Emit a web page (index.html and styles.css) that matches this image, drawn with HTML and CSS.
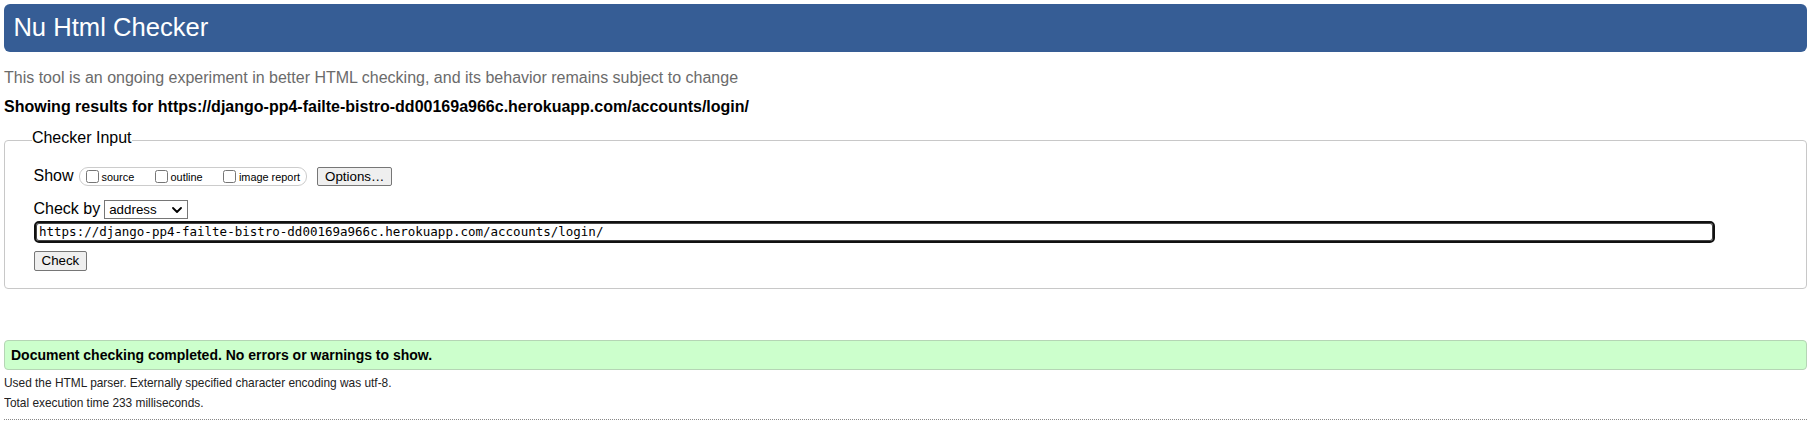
FILE: index.html
```html
<!DOCTYPE html>
<html lang="en">
<head>
<meta charset="utf-8">
<title>Nu Html Checker</title>
<link rel="stylesheet" href="styles.css">
</head>
<body>
<h1 class="title">Nu Html Checker</h1>
<p class="intro">This tool is an ongoing experiment in better HTML checking, and its behavior remains subject to change</p>
<p class="results-for">Showing results for https://django-pp4-failte-bistro-dd00169a966c.herokuapp.com/accounts/login/</p>
<form class="checker-form">
  <fieldset class="checker-input">
    <legend class="checker-legend">Checker Input</legend>
    <div class="row row-show">
      <span class="row-label">Show</span>
      <span class="show-group">
        <label class="opt"><input type="checkbox" class="cb"><span>source</span></label>
        <label class="opt"><input type="checkbox" class="cb"><span>outline</span></label>
        <label class="opt"><input type="checkbox" class="cb"><span>image report</span></label>
      </span>
      <button type="button" class="btn btn-options">Options…</button>
    </div>
    <div class="row row-by">
      <span class="row-label">Check by</span>
      <span class="select-wrap">
        <select class="select"><option>address</option></select>
        <svg class="chevron" width="10" height="6" viewBox="0 0 10 6" aria-hidden="true"><path d="M1 1 L5 5 L9 1" fill="none" stroke="#000" stroke-width="1.8" stroke-linecap="round" stroke-linejoin="round"/></svg>
      </span>
    </div>
    <div class="row row-url">
      <input type="text" class="url" value="https://django-pp4-failte-bistro-dd00169a966c.herokuapp.com/accounts/login/">
    </div>
    <div class="row row-submit">
      <button type="button" class="btn btn-check">Check</button>
    </div>
  </fieldset>
</form>
<p class="success">Document checking completed. No errors or warnings to show.</p>
<p class="meta">Used the HTML parser. Externally specified character encoding was utf-8.</p>
<p class="meta">Total execution time 233 milliseconds.</p>
<hr class="rule">
</body>
</html>
```
FILE: styles.css
```css
html {
  background: #fff;
}
body {
  margin: 4px 8px 0 4px;
  font-family: "Liberation Sans", Arial, sans-serif;
  font-size: 16px;
  color: #000;
}
.title {
  margin: 0;
  height: 48px;
  box-sizing: border-box;
  padding: 0 0 2px 9.4px;
  line-height: 46px;
  font-size: 25.6px;
  font-weight: normal;
  color: #fff;
  background: #365d95;
  border-radius: 6px;
}
.intro {
  margin: 15.76px 0 0;
  line-height: 20px;
  color: #6b6b6b;
}
.results-for {
  margin: 9.4px 0 0;
  line-height: 20px;
  font-weight: bold;
}
.checker-form {
  margin: 0;
}
.checker-input {
  margin: 11.34px 0 0;
  min-width: 0;
  border: 1px solid #c8c8c8;
  border-radius: 4px;
  padding: 14px 0 17px 28.5px;
}
.checker-legend {
  padding: 0 0 4px;
  margin-left: -1.6px;
  line-height: 20px;
  font-size: 16px;
}
.row {
  display: flex;
  align-items: center;
}
.row-show {
  height: 20px;
}
.row-label {
  line-height: 20px;
}
.show-group {
  display: inline-flex;
  align-items: center;
  height: 19px;
  box-sizing: border-box;
  margin-left: 5px;
  padding: 0 6px 0 2px;
  border: 1px solid #ccc;
  border-radius: 9px;
  gap: 16.3px;
}
.opt {
  display: inline-flex;
  align-items: center;
  font-family: "Liberation Sans", Arial, sans-serif;
  font-size: 10.9px;
  line-height: 13px;
  padding-top: 2px;
  color: #000;
}
.cb {
  margin: 0 3px 2px 4px;
  width: 13px;
  height: 13px;
}
.btn {
  font-family: "Liberation Sans", Arial, sans-serif;
  font-size: 13.333px;
  line-height: 15px;
  padding: 0 7px;
  border: 1px solid #767676;
  border-radius: 2px;
  background: #efefef;
  color: #000;
}
.btn-options {
  margin-left: 10px;
  height: 19px;
}
.row-by {
  margin-top: 13px;
  height: 20px;
}
.select-wrap {
  position: relative;
  display: inline-block;
  margin-left: 4px;
  height: 19px;
}
.select {
  appearance: none;
  -webkit-appearance: none;
  box-sizing: border-box;
  width: 84px;
  height: 19px;
  margin: 0;
  border: 1px solid #767676;
  border-radius: 0;
  padding: 0 0 0 4px;
  font-family: "Liberation Sans", Arial, sans-serif;
  font-size: 13.333px;
  background: #fff;
  color: #000;
}
.chevron {
  position: absolute;
  right: 6px;
  top: 7px;
  pointer-events: none;
}
.row-url {
  margin-top: 1.5px;
}
.url {
  box-sizing: border-box;
  width: 1681px;
  height: 22px;
  margin: 0 0 0 0.5px;
  border: 2px solid #111;
  box-shadow: inset 0 0 0 1px #444;
  border-radius: 5px;
  padding: 0 0 0 3px;
  font-family: "DejaVu Sans Mono", "Liberation Mono", monospace;
  font-size: 12.5px;
  color: #000;
  background: #fff;
  outline: none;
}
.row-submit {
  margin-top: 8px;
}
.btn-check {
  height: 20px;
}
.success {
  margin: 51px 0 0;
  border: 1px solid #b5d5b5;
  background: #ccffcc;
  border-radius: 4px;
  padding: 6px 6px;
  line-height: 16px;
  font-size: 14px;
  font-weight: bold;
}
.meta {
  margin: 3.25px 0 0;
  line-height: 20px;
  font-size: 11.9px;
  color: #222;
}
.meta + .meta {
  margin-top: 0;
}
.rule {
  margin: 6.25px 0 0;
  height: 0;
  border: 0;
  border-top: 1px dotted #888;
}
```
